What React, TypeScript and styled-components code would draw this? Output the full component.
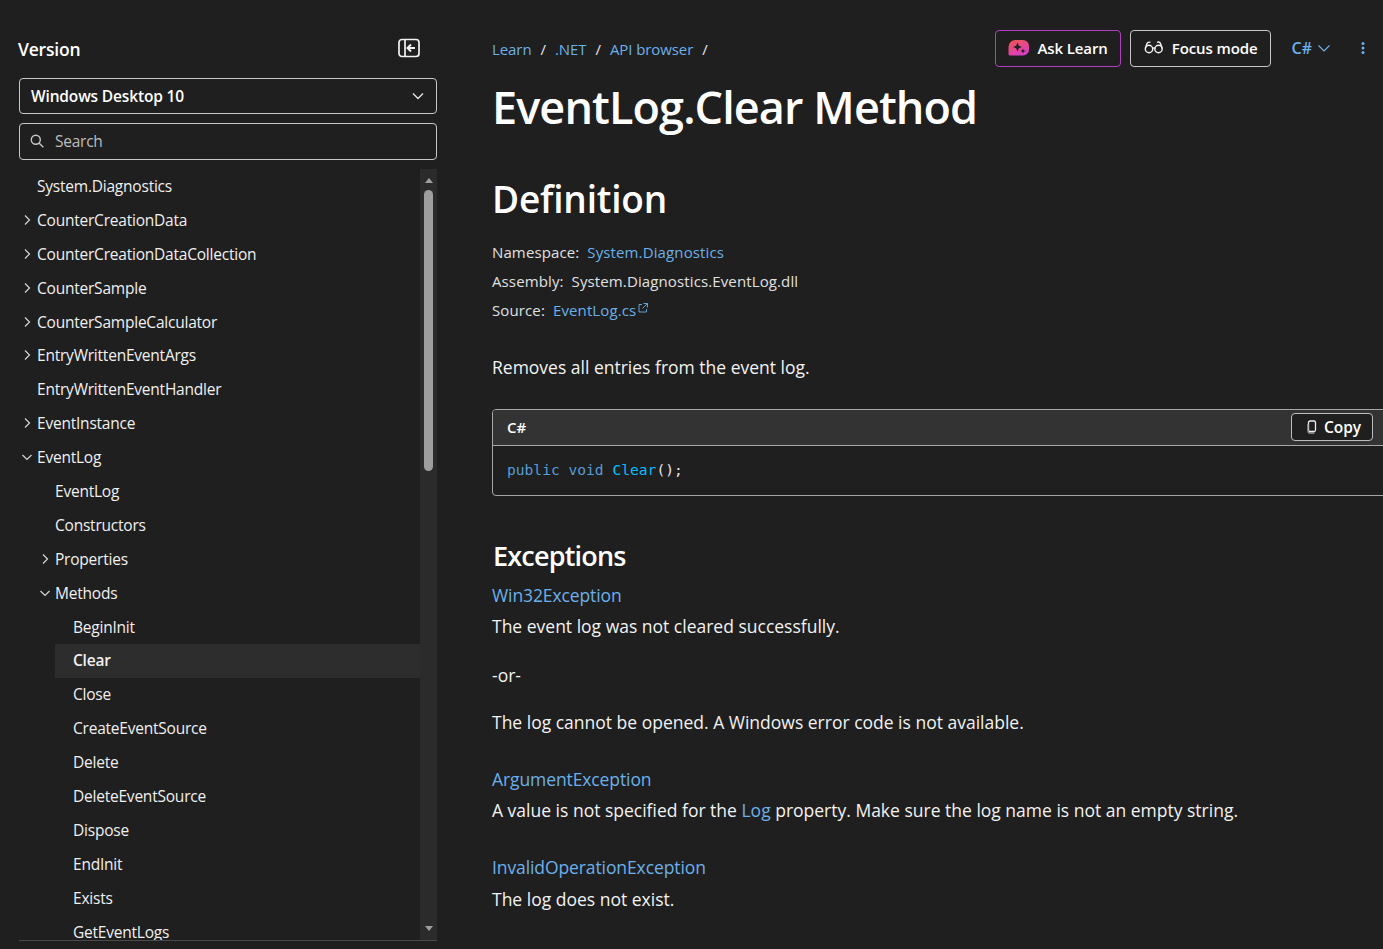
import React from 'react';
import styled, { createGlobalStyle } from 'styled-components';

const Global = createGlobalStyle`
  html, body { margin: 0; padding: 0; background: #1f1f1f; height: 100%; overflow: hidden; }
  * { box-sizing: border-box; }
  body { font-family: "Open Sans", "Noto Sans", sans-serif; color: #fff; }
`;

const Page = styled.div`
  display: flex;
  width: 1383px;
  height: 949px;
  overflow: hidden;
  background: #1f1f1f;
`;

const Sidebar = styled.aside`
  flex: 0 0 418px;
  margin-left: 19px;
  padding-top: 36px;
  display: flex;
  flex-direction: column;
  height: 949px;
`;

const SideHead = styled.div`
  display: flex;
  justify-content: space-between;
  align-items: center;
  height: 26px;
  padding-right: 17px;
  margin-bottom: 16px;
`;

const SideTitle = styled.div`
  margin-left: -1px;
  font-size: 17.5px;
  font-weight: 600;
  letter-spacing: -0.2px;
  color: #fff;
`;

const Select = styled.div`
  height: 36px;
  border: 1px solid #c7c7c7;
  border-radius: 4px;
  display: flex;
  align-items: center;
  justify-content: space-between;
  padding: 0 12px 0 11px;
  font-size: 15.5px;
  font-weight: 600;
  letter-spacing: -0.16px;
  margin-bottom: 9px;
`;

const SearchBox = styled.div`
  height: 37px;
  border: 1px solid #c7c7c7;
  border-radius: 4px;
  display: flex;
  align-items: center;
  gap: 11px;
  padding: 0 11px 2px 10px;
  font-size: 15.5px;
  letter-spacing: -0.25px;
  color: #bdbdbd;
  margin-bottom: 9px;
`;

const TreeWrap = styled.div`
  display: flex;
  height: 772px;
  border-bottom: 1px solid #4a4a4a;
  overflow: hidden;
`;

const Tree = styled.div`
  flex: 1;
  overflow: hidden;
  padding-top: 1px;
`;

const Row = styled.div<{ $level: number; $selected?: boolean }>`
  position: relative;
  height: 33.9px;
  line-height: 33.9px;
  margin-left: ${p => (p.$selected ? p.$level * 18 : p.$level * 18 + 18)}px;
  padding-left: ${p => (p.$selected ? 18 : 0)}px;
  font-size: 15.5px;
  letter-spacing: -0.22px;
  white-space: nowrap;
  color: #f0f0f0;
  font-weight: ${p => (p.$selected ? 600 : 400)};
  background: ${p => (p.$selected ? '#2d2d2d' : 'transparent')};
`;

const Caret = styled.span`
  position: absolute;
  left: -16px;
  top: 10px;
  width: 12px;
  height: 12px;
  display: flex;
  color: #d6d6d6;
`;

const Track = styled.div`
  flex: 0 0 17px;
  background: #2b2b2b;
  display: flex;
  flex-direction: column;
  align-items: center;
  padding-top: 9px;
  position: relative;
`;

const Thumb = styled.div`
  width: 9px;
  height: 281px;
  margin-top: 7px;
  background: #9e9e9e;
  border-radius: 5px;
`;

const ArrowUp = styled.div`
  width: 0; height: 0;
  border-left: 4.5px solid transparent;
  border-right: 4.5px solid transparent;
  border-bottom: 5px solid #a0a0a0;
`;

const ArrowDown = styled.div`
  position: absolute;
  bottom: 9px;
  width: 0; height: 0;
  border-left: 4.5px solid transparent;
  border-right: 4.5px solid transparent;
  border-top: 5px solid #a0a0a0;
`;

const Main = styled.main`
  flex: 0 0 auto;
  width: 1000px;
  margin-left: 55px;
  padding-top: 30px;
`;

const TopBar = styled.div`
  display: flex;
  width: 873px;
  align-items: center;
  height: 37px;
`;

const Crumbs = styled.div`
  flex: 1;
  display: flex;
  gap: 9px;
  font-size: 15px;
  letter-spacing: -0.08px;
`;

const Link = styled.a`
  color: #6cb0ea;
  text-decoration: none;
`;

const Sep = styled.span`
  color: #e6e6e6;
`;

const PillButton = styled.div<{ $accent?: boolean }>`
  height: 37px;
  display: flex;
  align-items: center;
  gap: ${p => (p.$accent ? 7 : 8)}px;
  border: 1px solid ${p => (p.$accent ? '#b13ec0' : '#c7c7c7')};
  border-radius: 4px;
  padding: 0 12px 2px ${p => (p.$accent ? 12 : 13)}px;
  font-size: 15px;
  font-weight: 600;
  letter-spacing: -0.1px;
  margin-right: 9px;
`;

const LangPick = styled.div`
  display: flex;
  align-items: center;
  gap: 6px;
  margin-left: 12px;
  padding-bottom: 2px;
  font-size: 16px;
  font-weight: 600;
  color: #6cb0ea;
`;

const Dots = styled.div`
  margin-left: 31px;
  margin-top: -1px;
  display: flex;
`;

const H1 = styled.h1`
  margin: 10px 0 0 0;
  font-size: 45px;
  line-height: 60px;
  font-weight: 600;
  letter-spacing: -0.9px;
  color: #fff;
`;

const H2 = styled.h2`
  margin: 37px 0 0 0;
  font-size: 37px;
  line-height: 50px;
  font-weight: 600;
  letter-spacing: -0.2px;
`;

const Meta = styled.div`
  margin-top: 13px;
  display: flex;
  flex-direction: column;
`;

const MetaLine = styled.div`
  display: flex;
  align-items: center;
  gap: 8px;
  height: 29px;
  font-size: 15px;
  letter-spacing: 0.12px;
  color: #e0e0e0;
`;

const Ext = styled.span`
  display: inline-flex;
  margin-left: -6px;
  margin-top: -4px;
`;

const Para = styled.p<{ $top?: number }>`
  margin: ${p => p.$top ?? 0}px 0 0;
  font-size: 17.5px;
  line-height: 31px;
  letter-spacing: 0;
  color: #f2f2f2;
  white-space: nowrap;
`;

const LinkPara = styled(Para)`
  color: #6cb0ea;
  letter-spacing: -0.1px;
`;

const CodeBlock = styled.div`
  margin-top: 26px;
  width: 960px;
  height: 87px;
  border: 1px solid #a6a6a6;
  border-radius: 4px;
  overflow: hidden;
`;

const CodeHead = styled.div`
  height: 36px;
  background: #333;
  border-bottom: 1px solid #a6a6a6;
  display: flex;
  align-items: center;
  justify-content: space-between;
  padding: 0 78px 1px 14px;
  font-size: 15px;
  font-weight: 600;
`;

const CopyBtn = styled.div`
  width: 82px;
  height: 28px;
  margin-top: -1px;
  padding-left: 4px;
  background: #1f1f1f;
  border: 1px solid #bdbdbd;
  border-radius: 4px;
  display: flex;
  align-items: center;
  justify-content: center;
  gap: 7px;
  font-size: 15.5px;
  font-weight: 600;
  letter-spacing: 0;
`;

const CodeBody = styled.pre`
  margin: 0;
  padding: 14px 14px 0;
  font-family: "DejaVu Sans Mono", "Liberation Mono", monospace;
  font-size: 14.6px;
  line-height: 19px;
  color: #e6e6e6;
`;

const Kw = styled.span`color: #569cd6;`;
const Fn = styled.span`color: #00bfff;`;

const H3 = styled.h3`
  margin: 41px 0 0 1px;
  font-size: 27px;
  line-height: 38px;
  font-weight: 600;
  letter-spacing: -0.8px;
`;

const InlineLink = styled.span`color: #6cb0ea;`;

const IconBox = styled.span`
  display: inline-flex;
  margin-top: -3px;
`;

const Chevron = ({ open }: { open?: boolean }) => (
  <svg width="12" height="12" viewBox="0 0 12 12" fill="none" stroke="currentColor" strokeWidth="1.2">
    {open ? <path d="M1.500 4l4.500 4.500L10.500 4" /> : <path d="M4 1.500L8.500 6 4 10.500" />}
  </svg>
);

type Item = { t: string; l: number; c?: 'r' | 'd'; sel?: boolean };

const items: Item[] = [
  { t: 'System.Diagnostics', l: 0 },
  { t: 'CounterCreationData', l: 0, c: 'r' },
  { t: 'CounterCreationDataCollection', l: 0, c: 'r' },
  { t: 'CounterSample', l: 0, c: 'r' },
  { t: 'CounterSampleCalculator', l: 0, c: 'r' },
  { t: 'EntryWrittenEventArgs', l: 0, c: 'r' },
  { t: 'EntryWrittenEventHandler', l: 0 },
  { t: 'EventInstance', l: 0, c: 'r' },
  { t: 'EventLog', l: 0, c: 'd' },
  { t: 'EventLog', l: 1 },
  { t: 'Constructors', l: 1 },
  { t: 'Properties', l: 1, c: 'r' },
  { t: 'Methods', l: 1, c: 'd' },
  { t: 'BeginInit', l: 2 },
  { t: 'Clear', l: 2, sel: true },
  { t: 'Close', l: 2 },
  { t: 'CreateEventSource', l: 2 },
  { t: 'Delete', l: 2 },
  { t: 'DeleteEventSource', l: 2 },
  { t: 'Dispose', l: 2 },
  { t: 'EndInit', l: 2 },
  { t: 'Exists', l: 2 },
  { t: 'GetEventLogs', l: 2 },
];

export default function App() {
  return (
    <Page>
      <Global />
      <Sidebar>
        <SideHead>
          <SideTitle>Version</SideTitle>
          <IconBox>
            <svg width="22" height="20" viewBox="0 0 22 20" fill="none" stroke="#f2f2f2" strokeWidth="1.7">
              <rect x="1" y="1.500" width="20" height="17" rx="3" />
              <path d="M7 2v16" />
              <path d="M17 10h-7M13 6.500L9.500 10l3.500 3.500" strokeWidth="2" />
            </svg>
          </IconBox>
        </SideHead>
        <Select>
          Windows Desktop 10
          <svg width="12" height="12" viewBox="0 0 12 12" fill="none" stroke="#e6e6e6" strokeWidth="1.3">
            <path d="M1 3.500l5 5 5-5" />
          </svg>
        </Select>
        <SearchBox>
          <svg width="14" height="14" viewBox="0 0 14 14" fill="none" stroke="#c8c8c8" strokeWidth="1.4">
            <circle cx="5.800" cy="5.800" r="4.500" />
            <path d="M9 9l4.300 4.300" />
          </svg>
          Search
        </SearchBox>
        <TreeWrap>
          <Tree>
            {items.map((it, i) => (
              <Row key={i} $level={it.l} $selected={it.sel}>
                {it.c && (
                  <Caret>
                    <Chevron open={it.c === 'd'} />
                  </Caret>
                )}
                {it.t}
              </Row>
            ))}
          </Tree>
          <Track>
            <ArrowUp />
            <Thumb />
            <ArrowDown />
          </Track>
        </TreeWrap>
      </Sidebar>
      <Main>
        <TopBar>
          <Crumbs>
            <Link>Learn</Link><Sep>/</Sep>
            <Link>.NET</Link><Sep>/</Sep>
            <Link>API browser</Link><Sep>/</Sep>
          </Crumbs>
          <PillButton $accent>
            <svg width="22" height="18" viewBox="0 0 22 18">
              <defs>
                <linearGradient id="askg" x1="0" y1="0" x2="0.5" y2="1">
                  <stop offset="0" stopColor="#f2554a" />
                  <stop offset="1" stopColor="#d93fc0" />
                </linearGradient>
              </defs>
              <path d="M7.500 1h7.500a6 6 0 0 1 6 6v3a6 6 0 0 1-6 6.500H2a1.500 1.500 0 0 1-1.500-1.500V8A7 7 0 0 1 7.500 1z" fill="url(#askg)" />
              <path d="M9.500 3.500l1.300 3.200 3.200 1.300-3.200 1.300-1.300 3.200-1.300-3.200-3.200-1.300 3.200-1.300z" fill="#1f1f1f" />
              <path d="M15 9.500l.7 1.800 1.800.7-1.800.7-.7 1.800-.7-1.800-1.800-.7 1.800-.7z" fill="#1f1f1f" />
            </svg>
            Ask Learn
          </PillButton>
          <PillButton>
            <svg width="20" height="16" viewBox="0 0 20 16" fill="none" stroke="#f2f2f2" strokeWidth="1.4">
              <circle cx="5" cy="9" r="3.700" />
              <circle cx="14.500" cy="9" r="3.700" />
              <path d="M8.500 8.500c1-.8 2-.8 3 0" />
              <path d="M1.300 8.500l1.500-4.500C3.300 2.500 5 1.800 6.500 2.300M18.200 8.500l-1.500-4.500C16.200 2.500 14.500 1.800 13 2.300" />
            </svg>
            Focus mode
          </PillButton>
          <LangPick>
            C#
            <svg width="12" height="12" viewBox="0 0 12 12" fill="none" stroke="#6cb0ea" strokeWidth="1.2">
              <path d="M.500 3.500l5.500 5.500 5.500-5.500" />
            </svg>
          </LangPick>
          <Dots>
            <svg width="4" height="12" viewBox="0 0 4 12" fill="#6cb0ea">
              <circle cx="2" cy="1.500" r="1.500" />
              <circle cx="2" cy="6" r="1.500" />
              <circle cx="2" cy="10.500" r="1.500" />
            </svg>
          </Dots>
        </TopBar>
        <H1>EventLog.Clear Method</H1>
        <H2>Definition</H2>
        <Meta>
          <MetaLine>Namespace: <Link>System.Diagnostics</Link></MetaLine>
          <MetaLine>Assembly: <span>System.Diagnostics.EventLog.dll</span></MetaLine>
          <MetaLine>
            Source: <Link>EventLog.cs</Link>
            <Ext>
              <svg width="10" height="10" viewBox="0 0 10 10" fill="none" stroke="#6cb0ea" strokeWidth="0.9">
                <path d="M4 1.500H1v7.500h7.500V6M5.500.500h4v4M9.500.500L4.500 5.500" />
              </svg>
            </Ext>
          </MetaLine>
        </Meta>
        <Para $top={28}>Removes all entries from the event log.</Para>
        <CodeBlock>
          <CodeHead>
            C#
            <CopyBtn>
              <svg width="10" height="14" viewBox="0 0 10 14" fill="none" stroke="#f0f0f0" strokeWidth="1.300">
                <rect x="1.500" y="1" width="7" height="10.500" rx="1.500" />
                <path d="M1 4v7.500a1.500 1.500 0 0 0 1.500 1.500h5" stroke="#a0a0a0" />
              </svg>
              Copy
            </CopyBtn>
          </CodeHead>
          <CodeBody>
            <Kw>public</Kw> <Kw>void</Kw> <Fn>Clear</Fn>();
          </CodeBody>
        </CodeBlock>
        <H3>Exceptions</H3>
        <LinkPara $top={5}>Win32Exception</LinkPara>
        <Para>The event log was not cleared successfully.</Para>
        <Para $top={18}>-or-</Para>
        <Para $top={16}>The log cannot be opened. A Windows error code is not available.</Para>
        <LinkPara $top={26}>ArgumentException</LinkPara>
        <Para>A value is not specified for the <InlineLink>Log</InlineLink> property. Make sure the log name is not an empty string.</Para>
        <LinkPara $top={26}>InvalidOperationException</LinkPara>
        <Para $top={1}>The log does not exist.</Para>
      </Main>
    </Page>
  );
}
